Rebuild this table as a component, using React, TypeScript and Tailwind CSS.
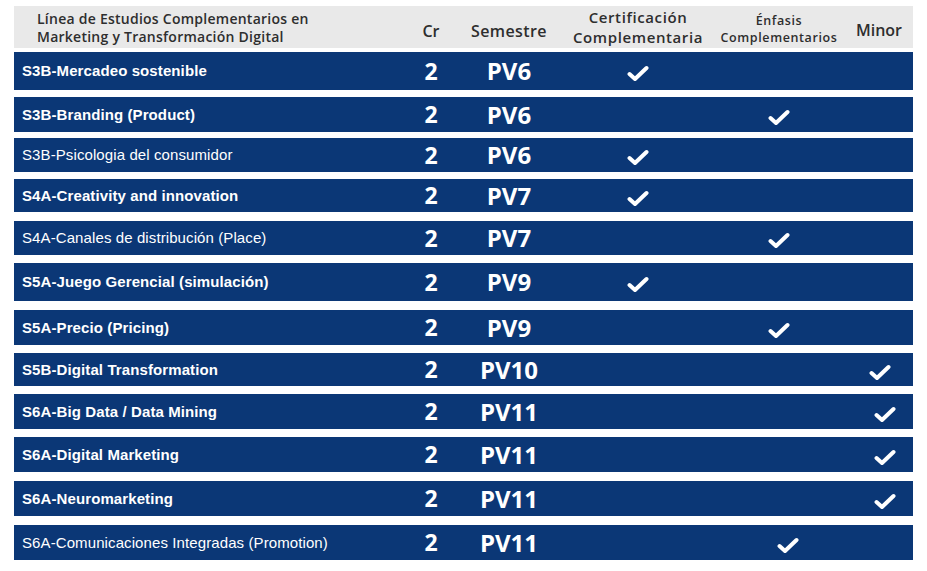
import React from "react";

type Row = {
  name: string;
  bold: boolean;
  sem: string;
  col: "cert" | "enf" | "min";
  box: string;
  checkPos: string;
};

const rows: Row[] = [
  { name: "S3B-Mercadeo sostenible", bold: true, sem: "PV6", col: "cert", box: "mt-[4px] h-[38px]", checkPos: "" },
  { name: "S3B-Branding (Product)", bold: true, sem: "PV6", col: "enf", box: "mt-[7px] h-[35px]", checkPos: "" },
  { name: "S3B-Psicologia del consumidor", bold: false, sem: "PV6", col: "cert", box: "mt-[6px] h-[34px]", checkPos: "" },
  { name: "S4A-Creativity and innovation", bold: true, sem: "PV7", col: "cert", box: "mt-[7px] h-[33px]", checkPos: "" },
  { name: "S4A-Canales de distribución (Place)", bold: false, sem: "PV7", col: "enf", box: "mt-[9px] h-[34px]", checkPos: "" },
  { name: "S5A-Juego Gerencial (simulación)", bold: true, sem: "PV9", col: "cert", box: "mt-[8px] h-[38px]", checkPos: "" },
  { name: "S5A-Precio (Pricing)", bold: true, sem: "PV9", col: "enf", box: "mt-[9px] h-[35px]", checkPos: "" },
  { name: "S5B-Digital Transformation", bold: true, sem: "PV10", col: "min", box: "mt-[8px] h-[33px]", checkPos: "ml-[4px]" },
  { name: "S6A-Big Data / Data Mining", bold: true, sem: "PV11", col: "min", box: "mt-[8px] h-[35px]", checkPos: "ml-[14px]" },
  { name: "S6A-Digital Marketing", bold: true, sem: "PV11", col: "min", box: "mt-[8px] h-[35px]", checkPos: "ml-[14px]" },
  { name: "S6A-Neuromarketing", bold: true, sem: "PV11", col: "min", box: "mt-[9px] h-[35px]", checkPos: "ml-[14px]" },
  { name: "S6A-Comunicaciones Integradas (Promotion)", bold: false, sem: "PV11", col: "enf", box: "mt-[9px] h-[35px]", checkPos: "ml-[18px]" },
];

function Check({ cls }: { cls: string }) {
  return (
    <svg
      width="22"
      height="17"
      viewBox="0 0 22 17"
      className={`mt-[5px] ${cls}`}
      fill="none"
    >
      <path
        d="M2.5 9 L8 14 L19.5 3"
        stroke="white"
        strokeWidth="4"
        strokeLinecap="round"
        strokeLinejoin="round"
      />
    </svg>
  );
}

export default function App() {
  return (
    <div className="w-[927px] h-[571px] bg-white overflow-hidden">
      <div className="ml-[14px] w-[899px] pt-[6px]">
        {/* Header */}
        <div
          className="flex h-[42px] bg-[#e9e9e9] text-[#2e2e2e]"
          style={{ fontFamily: '"Open Sans", sans-serif' }}
        >
          <div className="w-[391px] pl-[23px] flex flex-col justify-center text-[14px] leading-[18px] font-semibold tracking-[0.25px] pt-[1px]">
            <span>Línea de Estudios Complementarios en</span>
            <span>Marketing y Transformación Digital</span>
          </div>
          <div className="w-[52px] flex items-center justify-center text-[16px] font-semibold pt-[8px]">
            Cr
          </div>
          <div className="w-[104px] flex items-center justify-center text-[16px] font-semibold tracking-[0.4px] pt-[8px]">
            Semestre
          </div>
          <div className="w-[154px] flex flex-col items-center justify-center text-[15px] leading-[20px] font-semibold tracking-[0.6px]">
            <span>Certificación</span>
            <span>Complementaria</span>
          </div>
          <div className="w-[128px] flex flex-col items-center justify-center text-[12.5px] leading-[17px] font-semibold tracking-[0.6px] pt-[3px]">
            <span>Énfasis</span>
            <span>Complementarios</span>
          </div>
          <div className="w-[70px] flex items-center justify-center text-[16px] font-semibold pt-[6px] pl-[2px]">
            Minor
          </div>
        </div>

        {/* Rows */}
        {rows.map((r, i) => (
          <div key={i} className={`flex items-center bg-[#0b3776] text-white ${r.box}`}>
            <div
              className={`w-[391px] pl-[8px] pt-[1px] text-[15px] tracking-[0.1px] ${r.bold ? "font-bold" : "font-normal"}`}
              style={{ fontFamily: '"Liberation Sans", Arial, sans-serif' }}
            >
              {r.name}
            </div>
            <div
              className="w-[52px] flex justify-center text-[23px] font-bold leading-none"
              style={{ fontFamily: '"Open Sans", sans-serif' }}
            >
              2
            </div>
            <div
              className="w-[104px] flex justify-center text-[24px] font-bold leading-none"
              style={{ fontFamily: '"Open Sans", sans-serif' }}
            >
              {r.sem}
            </div>
            <div className="w-[154px] flex justify-center">
              {r.col === "cert" && <Check cls={r.checkPos} />}
            </div>
            <div className="w-[128px] flex justify-center">
              {r.col === "enf" && <Check cls={r.checkPos} />}
            </div>
            <div className="w-[70px] flex justify-center">
              {r.col === "min" && <Check cls={r.checkPos} />}
            </div>
          </div>
        ))}
      </div>
    </div>
  );
}
